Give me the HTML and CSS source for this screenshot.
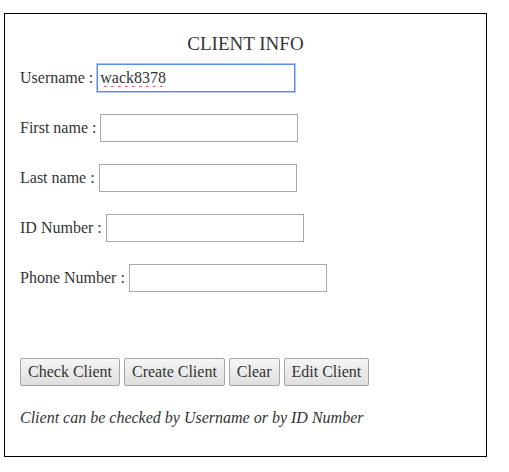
FILE: index.html
```html
<!DOCTYPE html>
<html>
<head>
<meta charset="utf-8">
<link rel="stylesheet" href="styles.css">
</head>
<body>
<div class="panel">
  <div class="title">CLIENT INFO</div>
  <div class="row"><label class="lbl">Username : </label><input class="field focused" type="text" value="wack8378" autofocus></div>
  <div class="row"><label class="lbl">First name : </label><input class="field" type="text"></div>
  <div class="row"><label class="lbl">Last name : </label><input class="field" type="text"></div>
  <div class="row"><label class="lbl">ID Number : </label><input class="field" type="text"></div>
  <div class="row"><label class="lbl">Phone Number : </label><input class="field" type="text"></div>
  <div class="buttons">
    <button class="btn">Check Client</button>
    <button class="btn">Create Client</button>
    <button class="btn">Clear</button>
    <button class="btn">Edit Client</button>
  </div>
  <p class="note">Client can be checked by Username or by ID Number</p>
</div>
</body>
</html>
```
FILE: styles.css
```css
html, body {
  margin: 0;
  padding: 0;
  background: #fff;
}
body {
  font-family: "Liberation Serif", "Times New Roman", serif;
  color: #333;
  font-size: 16px;
}
.panel {
  margin: 13px 0 0 4px;
  width: 483px;
  height: 444px;
  box-sizing: border-box;
  border: 1px solid #000;
  padding: 19px 15px 0 15px;
}
.title {
  text-align: center;
  font-size: 19px;
  line-height: 22px;
  height: 22px;
  margin-bottom: 9px;
}
.row {
  display: flex;
  align-items: center;
  height: 28px;
  margin-bottom: 22px;
  white-space: pre;
}
.lbl {
  font-size: 16px;
}
.field {
  width: 198px;
  height: 28px;
  box-sizing: border-box;
  border: 1px solid #a9a9a9;
  padding: 1px 2px;
  margin: 0;
  font-family: "Liberation Serif", "Times New Roman", serif;
  font-size: 16px;
  color: #333;
  outline: none;
  background: #fff;
}
.focused {
  border: 1px solid #5a8ee6;
  box-shadow: 0 0 0 1px rgba(120, 160, 235, 0.6);
  text-decoration: underline wavy #e0303a;
  text-decoration-thickness: 1px;
  text-underline-offset: 2px;
}
.buttons {
  display: flex;
  gap: 4px;
  margin-top: 66px;
}
.btn {
  height: 28px;
  box-sizing: border-box;
  padding: 0 7px;
  border: 1px solid #a6a6a6;
  border-radius: 2px;
  background: linear-gradient(#f6f6f6, #dedede);
  font-family: "Liberation Serif", "Times New Roman", serif;
  font-size: 16px;
  color: #333;
}
.note {
  margin: 23px 0 0 0;
  font-style: italic;
  font-size: 16px;
}
```
